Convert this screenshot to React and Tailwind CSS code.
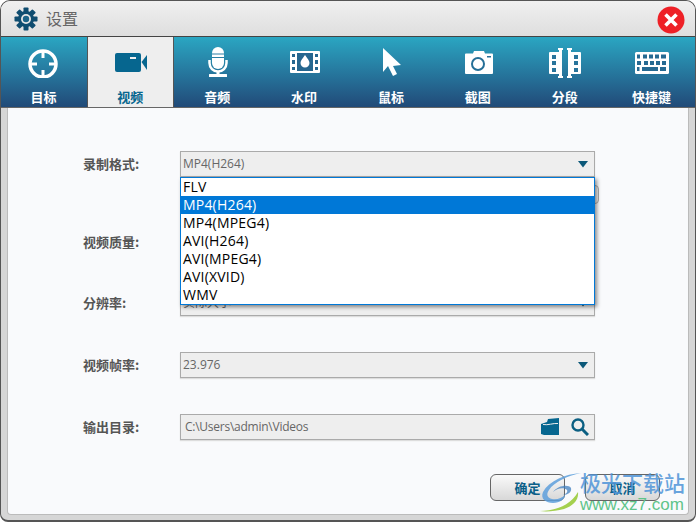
import { useState } from "react";

const CJK = { fontFamily: '"Noto Sans CJK SC", "Liberation Sans", sans-serif' };
const LATIN = { fontFamily: '"Open Sans", "Noto Sans CJK SC", sans-serif' };

const formats = ["FLV", "MP4(H264)", "MP4(MPEG4)", "AVI(H264)", "AVI(MPEG4)", "AVI(XVID)", "WMV"];

function TargetIcon() {
  return (
    <svg width="40" height="32" viewBox="0 0 40 32" fill="none" stroke="currentColor">
      <circle cx="20" cy="18" r="13" strokeWidth="3.5" />
      <path d="M20 5v7M20 24v7M7 18h7M26 18h7" strokeWidth="3" />
    </svg>
  );
}

function VideoIcon() {
  return (
    <svg width="40" height="32" viewBox="0 0 40 32" fill="currentColor">
      <rect x="5" y="7" width="26" height="19" rx="2" />
      <path d="M31.500 16L37 9v15z" />
      <rect x="20" y="11" width="6" height="2" fill="#eeeeee" />
    </svg>
  );
}

function MicIcon() {
  return (
    <svg width="40" height="32" viewBox="0 0 40 32" fill="currentColor">
      <path d="M15 7a6 6 0 0 1 12 0v10a6 6 0 0 1-12 0z" />
      <path d="M15 8h12M15 11.500h12" stroke="#2a7fa4" strokeWidth="1" />
      <path d="M12.500 14v3a8.500 8.500 0 0 0 17 0v-3" fill="none" stroke="currentColor" strokeWidth="2.500" />
      <rect x="19.500" y="25" width="3" height="4" />
      <rect x="12" y="28" width="18" height="3" rx="0.500" />
    </svg>
  );
}

function FilmIcon() {
  return (
    <svg width="40" height="32" viewBox="0 0 40 32">
      <rect x="6" y="5" width="30" height="22" rx="1" fill="currentColor" />
      <rect x="13" y="7" width="16" height="18" fill="#25668f" />
      <path d="M8 8h3v3H8zM8 14h3v4H8zM8 21h3v3H8zM31 8h3v3h-3zM31 14h3v4h-3zM31 21h3v3h-3z" fill="#25668f" />
      <path d="M21 9c2.500 3.500 4.500 5.500 4.500 8a4.500 4.500 0 0 1-9 0c0-2.500 2-4.500 4.500-8z" fill="currentColor" />
    </svg>
  );
}

function CursorIcon() {
  return (
    <svg width="40" height="32" viewBox="0 0 40 32" fill="currentColor">
      <path d="M12 2l18 17-8 1 4 8-4 2-5-10-5 6z" />
    </svg>
  );
}

function CameraIcon() {
  return (
    <svg width="40" height="32" viewBox="0 0 40 32">
      <path d="M7 8.500a1 1 0 0 1 1-1h7l1-2.500h10l1 2.500h7a1 1 0 0 1 1 1V27a1 1 0 0 1-1 1H8a1 1 0 0 1-1-1z" fill="currentColor" />
      <circle cx="20" cy="18" r="6" fill="none" stroke="#256f97" strokeWidth="2" />
      <rect x="29" y="10" width="4" height="1.500" fill="#256f97" />
    </svg>
  );
}

function SplitIcon() {
  return (
    <svg width="40" height="32" viewBox="0 0 40 32" fill="currentColor">
      <path d="M5 6h10v22H5a1 1 0 0 1-1-1V7a1 1 0 0 1 1-1zM25 6h10a1 1 0 0 1 1 1v20a1 1 0 0 1-1 1H25z" />
      <path d="M7 9h4v4H7zM7 15h4v4H7zM7 22h4v4H7zM29 9h4v4h-4zM29 15h4v4h-4zM29 22h4v4h-4z" fill="#28749b" />
      <path d="M13 2h5v2h-1v26h1v2h-5v-2h1V4h-1zM22 2h5v2h-1v26h1v2h-5v-2h1V4h-1z" />
    </svg>
  );
}

function KeyboardIcon() {
  return (
    <svg width="40" height="32" viewBox="0 0 40 32">
      <rect x="3" y="6" width="34" height="22" rx="1.500" fill="currentColor" />
      <path
        d="M5 8.500h3v4H5zM11 8.500h4v4h-4zM17 8.500h4v4h-4zM23 8.500h4v4h-4zM29 8.500h5v4h-5zM5 15h4v4H5zM12 15h4v4h-4zM18 15h4v4h-4zM24 15h4v4h-4zM30 15h4v4h-4zM5 21h2.500v4H5zM10 21h16v4H10zM28 21h6v4h-6z"
        fill="#266a92"
      />
    </svg>
  );
}

const tabs = [
  { label: "目标", icon: <TargetIcon /> },
  { label: "视频", icon: <VideoIcon />, active: true },
  { label: "音频", icon: <MicIcon /> },
  { label: "水印", icon: <FilmIcon /> },
  { label: "鼠标", icon: <CursorIcon /> },
  { label: "截图", icon: <CameraIcon /> },
  { label: "分段", icon: <SplitIcon /> },
  { label: "快捷键", icon: <KeyboardIcon /> },
];

function Gear() {
  const teeth = [0, 45, 90, 135, 180, 225, 270, 315];
  return (
    <svg width="24" height="24" viewBox="0 0 24 24">
      {teeth.map(a => (
        <rect key={a} x="9.500" y="0.500" width="5" height="5" rx="0.800" fill="#0f4d70" transform={`rotate(${a} 12 12)`} />
      ))}
      <circle cx="12" cy="12" r="8" fill="#0f4d70" />
      <circle cx="12" cy="12" r="5" fill="#e6e6e6" />
      <circle cx="12" cy="12" r="3.200" fill="#1c6488" />
    </svg>
  );
}

function CloseButton() {
  return (
    <svg width="28" height="28" viewBox="0 0 28 28">
      <circle cx="14" cy="14" r="13.500" fill="#ee2026" />
      <path d="M8.500 8.500l11 11M19.500 8.500l-11 11" stroke="#fff" strokeWidth="3.600" />
    </svg>
  );
}

function Arrow() {
  return (
    <svg width="10" height="7" viewBox="0 0 10 7" className="block">
      <path d="M0 0h10L5 6.500z" fill="#0b5878" />
    </svg>
  );
}

function Field({ value, children, className = "", textClass = "" }) {
  return (
    <div className={`h-[26px] w-[415px] flex items-center bg-[#eeeeee] border border-[#aaaaaa] shadow-[0_1px_1px_#dddddd] ${className}`}>
      <span className={`flex-1 text-[12px] text-[#666666] truncate ${textClass}`} style={LATIN}>{value}</span>
      {children}
    </div>
  );
}

function Row({ label, children, className = "" }) {
  return (
    <div className={`flex items-center ${className}`}>
      <span className="w-[97px] text-[13px] font-bold text-[#555555]" style={CJK}>{label}</span>
      {children}
    </div>
  );
}

function Watermark() {
  return (
    <div className="absolute right-[11px] bottom-[8px] flex items-center pointer-events-none">
      <svg width="44" height="42" viewBox="0 0 44 42" className="mr-[-3px]">
        <path d="M42 2C26 3 10 10 4 21c-3 7 3 11 10 11 7 0 12-4 12-8-3 3-8 5-13 4-5-1-6-5-3-9C15 11 28 5 42 2z" fill="#5d9fdc" opacity="0.85" />
        <path d="M14 21c4-4 11-5 14-2 1 2-1 4-4 5 5 0 9-3 8-7-2-4-13-3-18 4z" fill="#3f7fc0" opacity="0.75" />
        <path d="M1 40c14 0 30-5 38-19 1 8-5 14-14 17-8 2-17 3-24 2z" fill="#9acb3c" opacity="0.9" />
      </svg>
      <div className="flex flex-col items-start">
        <span className="text-[21px] leading-[24px] font-medium text-[#4f94d8] opacity-85" style={CJK}>极光下载站</span>
        <span className="text-[17px] leading-[18px] mt-[2px] text-[#5fc48a]" style={{ fontFamily: '"Liberation Sans", sans-serif' }}>www.xz7.com</span>
      </div>
    </div>
  );
}

export default function App() {
  const [selected] = useState("MP4(H264)");

  return (
    <div className="relative w-[696px] h-[522px] flex flex-col overflow-hidden bg-white">
      <div className="flex-1 flex flex-col rounded-t-[10px] rounded-b-[8px] border border-[#555555] border-b-2 overflow-hidden bg-[#d6d6d6]">
        {/* Title bar */}
        <div className="h-[36px] shrink-0 flex items-center bg-gradient-to-b from-[#f0f0f0] to-[#dedede] border-b border-[#444444]">
          <span className="ml-[13px]"><Gear /></span>
          <span className="ml-[8px] -mt-[2px] text-[16px] text-[#666666]" style={CJK}>设置</span>
          <span className="ml-auto mr-[10px] mt-[2px]"><CloseButton /></span>
        </div>

        {/* Tabs */}
        <div className="h-[71px] shrink-0 grid grid-cols-8 -ml-px bg-gradient-to-b from-[#2aa6c2] via-[#256f97] via-60% to-[#214a78] border-b border-[#666666]">
          {tabs.map(tab => (
            <div
              key={tab.label}
              className={`flex flex-col items-center pt-[9px] ${tab.active ? "bg-[#eeeeee] text-[#06668f] border-x border-[#555555]" : "text-white"}`}
            >
              {tab.icon}
              <span className="mt-[10px] text-[13px] leading-[18px] font-bold" style={CJK}>{tab.label}</span>
            </div>
          ))}
        </div>

        {/* Form panel */}
        <div className="relative flex-1 ml-[6px] mr-[6px] mb-[5px] pl-[75px] pt-[43px] bg-[#f9fafc] border-x border-b border-[#bbbbbb] rounded-b-[4px]">
          <div className="relative">
            <Row label="录制格式:">
              <Field value="MP4(H264)" className="pl-[2px] pr-[6px]"><Arrow /></Field>
            </Row>

            {/* Quality slider thumb, mostly behind the open list */}
            <div className="absolute left-[510px] top-[34px] w-[6px] h-[19px] bg-[#eeeeee] border border-[#aaaaaa] rounded-r-[4px]" />

            {/* Open format list */}
            <div className="absolute left-[97px] top-[26px] z-10 w-[415px] bg-white border border-[#0078d7] shadow-[2px_2px_4px_rgba(0,0,0,0.45)]" style={LATIN}>
              {formats.map(f => (
                <div
                  key={f}
                  className={`h-[18px] pl-[2px] text-[14px] leading-[18px] tracking-[0.2px] ${f === selected ? "bg-[#0078d7] text-white" : "text-black"}`}
                >
                  {f}
                </div>
              ))}
            </div>

            <Row label="视频质量:" className="mt-[52px] h-[26px]" />

            <Row label="分辨率:" className="mt-[35px]">
              <Field value="实际大小" className="pl-[2px] pr-[6px]"><Arrow /></Field>
            </Row>

            <Row label="视频帧率:" className="mt-[36px]">
              <Field value="23.976" className="pl-[2px] pr-[6px]"><Arrow /></Field>
            </Row>

            <Row label="输出目录:" className="mt-[36px]">
              <Field value="C:\Users\admin\Videos" className="pl-[4px] pr-[5px]" textClass="tracking-[-0.25px]">
                <svg width="19" height="18" viewBox="0 0 19 18" className="text-[#06668f]">
                  <path d="M0 6l6-2 1-3 11-1v17L3 17 0 16z" fill="currentColor" />
                  <path d="M2 6.500c5 1 10-1.500 15-1" fill="none" stroke="#eeeeee" strokeWidth="1" />
                </svg>
                <svg width="18" height="18" viewBox="0 0 18 18" className="ml-[11px] text-[#0b5f82]" fill="none" stroke="currentColor">
                  <circle cx="7" cy="7" r="5.500" strokeWidth="2.400" />
                  <path d="M11 11l6 6" strokeWidth="3" />
                </svg>
              </Field>
            </Row>

            {/* Dialog buttons */}
            <div className="flex justify-end gap-[20px] mt-[34px] w-[577px]">
              {["确定", "取消"].map(text => (
                <button
                  key={text}
                  className="w-[75px] h-[27px] rounded-[6px] border border-[#666666] bg-gradient-to-b from-[#fafafa] to-[#d8d8d8] text-[13px] font-bold text-[#0a5f88]"
                  style={CJK}
                >
                  {text}
                </button>
              ))}
            </div>
          </div>
        </div>
      </div>
      <Watermark />
    </div>
  );
}
